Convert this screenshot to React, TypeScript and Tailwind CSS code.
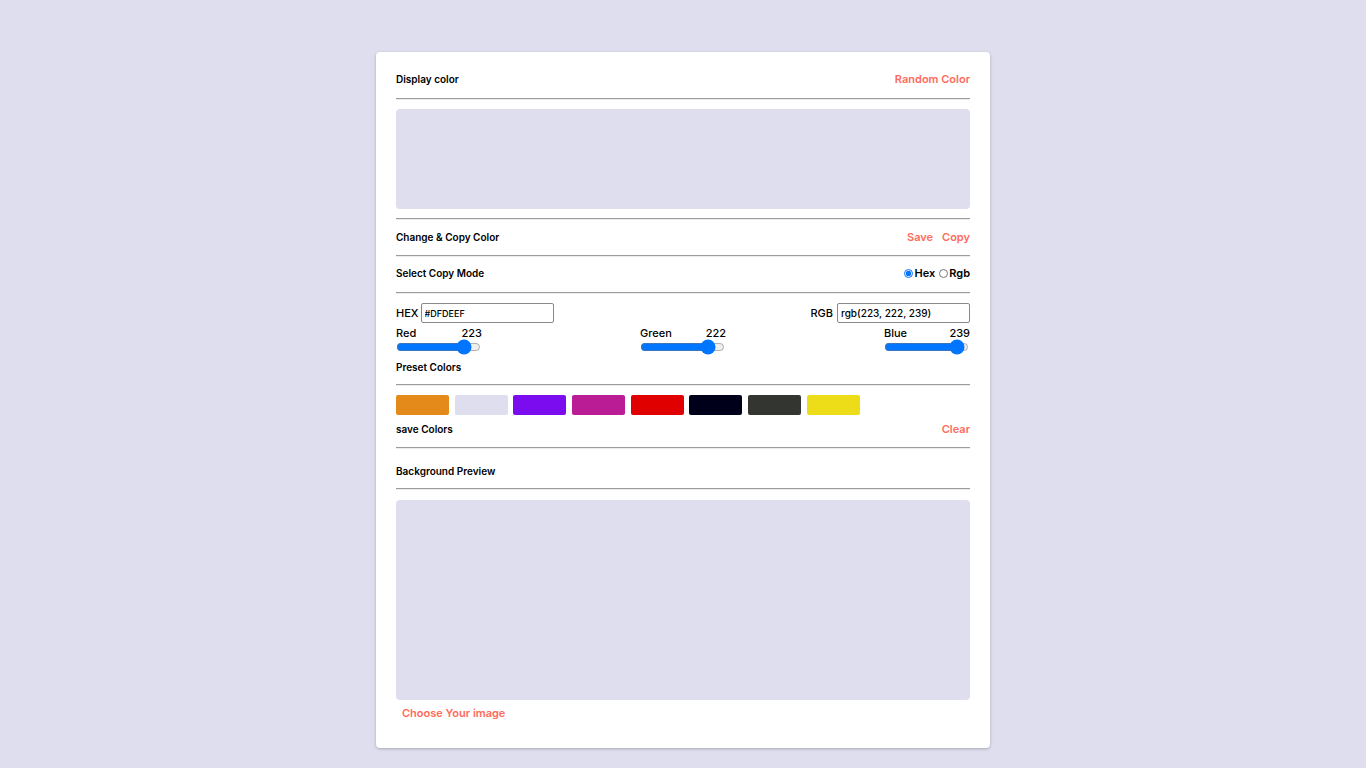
import { useState } from 'react'

const presets = ['#E38A1A', '#DFDEEF', '#7B0CF0', '#BA1C95', '#E00000', '#00001A', '#333530', '#EDDD18']

function Rule() {
  return <div className="h-[2px] border-t border-t-[#9c9c9c] border-b border-b-[#ececec]" />
}

function Slider({ label, value }: { label: string; value: number }) {
  return (
    <div className="w-[86px] flex flex-col">
      <div className="flex justify-between items-center h-[14px] text-[11px] font-medium text-black">
        <span>{label}</span>
        <span>{value}</span>
      </div>
      <input
        type="range"
        min={0}
        max={255}
        defaultValue={value}
        className="w-[85px] h-[14px] m-0 accent-[#0075ff]"
      />
    </div>
  )
}

export default function App() {
  const [mode, setMode] = useState('hex')
  const hex = '#DFDEEF'

  return (
    <div
      className="min-h-[768px] w-full bg-[#DFDEEF] pt-[52px] pb-5"
      style={{ fontFamily: 'Inter, "Noto Sans", sans-serif' }}
    >
      <div className="mx-auto w-[614px] bg-white rounded shadow-[0_1px_3px_rgba(0,0,0,0.25)] px-5 pt-5 pb-[22px]">
        {/* display */}
        <div className="flex justify-between items-center h-[15px]">
          <span className="text-[10px] font-semibold text-black">Display color</span>
          <button className="text-[11px] font-semibold text-[#ff6b5b]">Random Color</button>
        </div>
        <div className="mt-[11px]">
          <Rule />
        </div>
        <div className="mt-[9px] h-[100px] rounded-sm" style={{ backgroundColor: hex }} />
        <div className="mt-[9px]">
          <Rule />
        </div>

        {/* change & copy */}
        <div className="flex justify-between items-center h-[35px]">
          <span className="text-[10px] font-semibold text-black">Change &amp; Copy Color</span>
          <div className="flex gap-[9px] text-[11px] font-semibold text-[#ff6b5b]">
            <button>Save</button>
            <button>Copy</button>
          </div>
        </div>
        <Rule />

        {/* copy mode */}
        <div className="flex justify-between items-center h-[35px] pb-[3px]">
          <span className="text-[10px] font-semibold text-black">Select Copy Mode</span>
          <div className="flex items-center text-[11px] font-semibold text-black">
            <label className="flex items-center">
              <input
                type="radio"
                name="mode"
                checked={mode === 'hex'}
                onChange={() => setMode('hex')}
                className="w-[9px] h-[9px] m-0 mr-[1px] accent-[#0075ff]"
              />
              Hex
            </label>
            <label className="flex items-center ml-[4px]">
              <input
                type="radio"
                name="mode"
                checked={mode === 'rgb'}
                onChange={() => setMode('rgb')}
                className="w-[9px] h-[9px] m-0 mr-[1px] accent-[#0075ff]"
              />
              Rgb
            </label>
          </div>
        </div>
        <Rule />

        {/* inputs */}
        <div className="flex justify-between items-center mt-[9px] h-[20px] text-[11px] font-medium text-black">
          <label className="flex items-center gap-[2px]">
            HEX
            <input
              readOnly
              value={hex}
              className="w-[133px] h-[20px] border border-[#8a8a8a] rounded-[2px] px-[3px] text-[9px] text-black outline-none"
            />
          </label>
          <label className="flex items-center gap-[4px]">
            RGB
            <input
              readOnly
              value="rgb(223, 222, 239)"
              className="w-[133px] h-[20px] border border-[#8a8a8a] rounded-[2px] px-[3px] text-[10px] text-black outline-none"
            />
          </label>
        </div>
        <div className="flex justify-between mt-[3px]">
          <Slider label="Red" value={223} />
          <Slider label="Green" value={222} />
          <Slider label="Blue" value={239} />
        </div>

        {/* presets */}
        <div className="flex items-center h-[14px] mt-[6px] text-[10px] font-semibold text-black">Preset Colors</div>
        <div className="mt-[10px]">
          <Rule />
        </div>
        <div className="flex gap-[5.7px] mt-[9px]">
          {presets.map((c) => (
            <div key={c} className="w-[53px] h-[20px] rounded-[2px]" style={{ backgroundColor: c }} />
          ))}
        </div>
        <div className="flex justify-between items-center h-[16px] mt-[6px]">
          <span className="text-[10px] font-semibold text-black">save Colors</span>
          <button className="text-[11px] font-semibold text-[#ff6b5b]">Clear</button>
        </div>
        <div className="mt-[10px]">
          <Rule />
        </div>

        {/* background preview */}
        <div className="flex items-center h-[39px] pt-[5px]">
          <span className="text-[10px] font-semibold text-black">Background Preview</span>
        </div>
        <Rule />
        <div className="mt-[10px] h-[200px] rounded-sm" style={{ backgroundColor: hex }} />
        <div className="flex items-center h-[26px] pl-[6px]">
          <button className="text-[11px] font-semibold text-[#ff6b5b]">Choose Your image</button>
        </div>
      </div>
    </div>
  )
}
